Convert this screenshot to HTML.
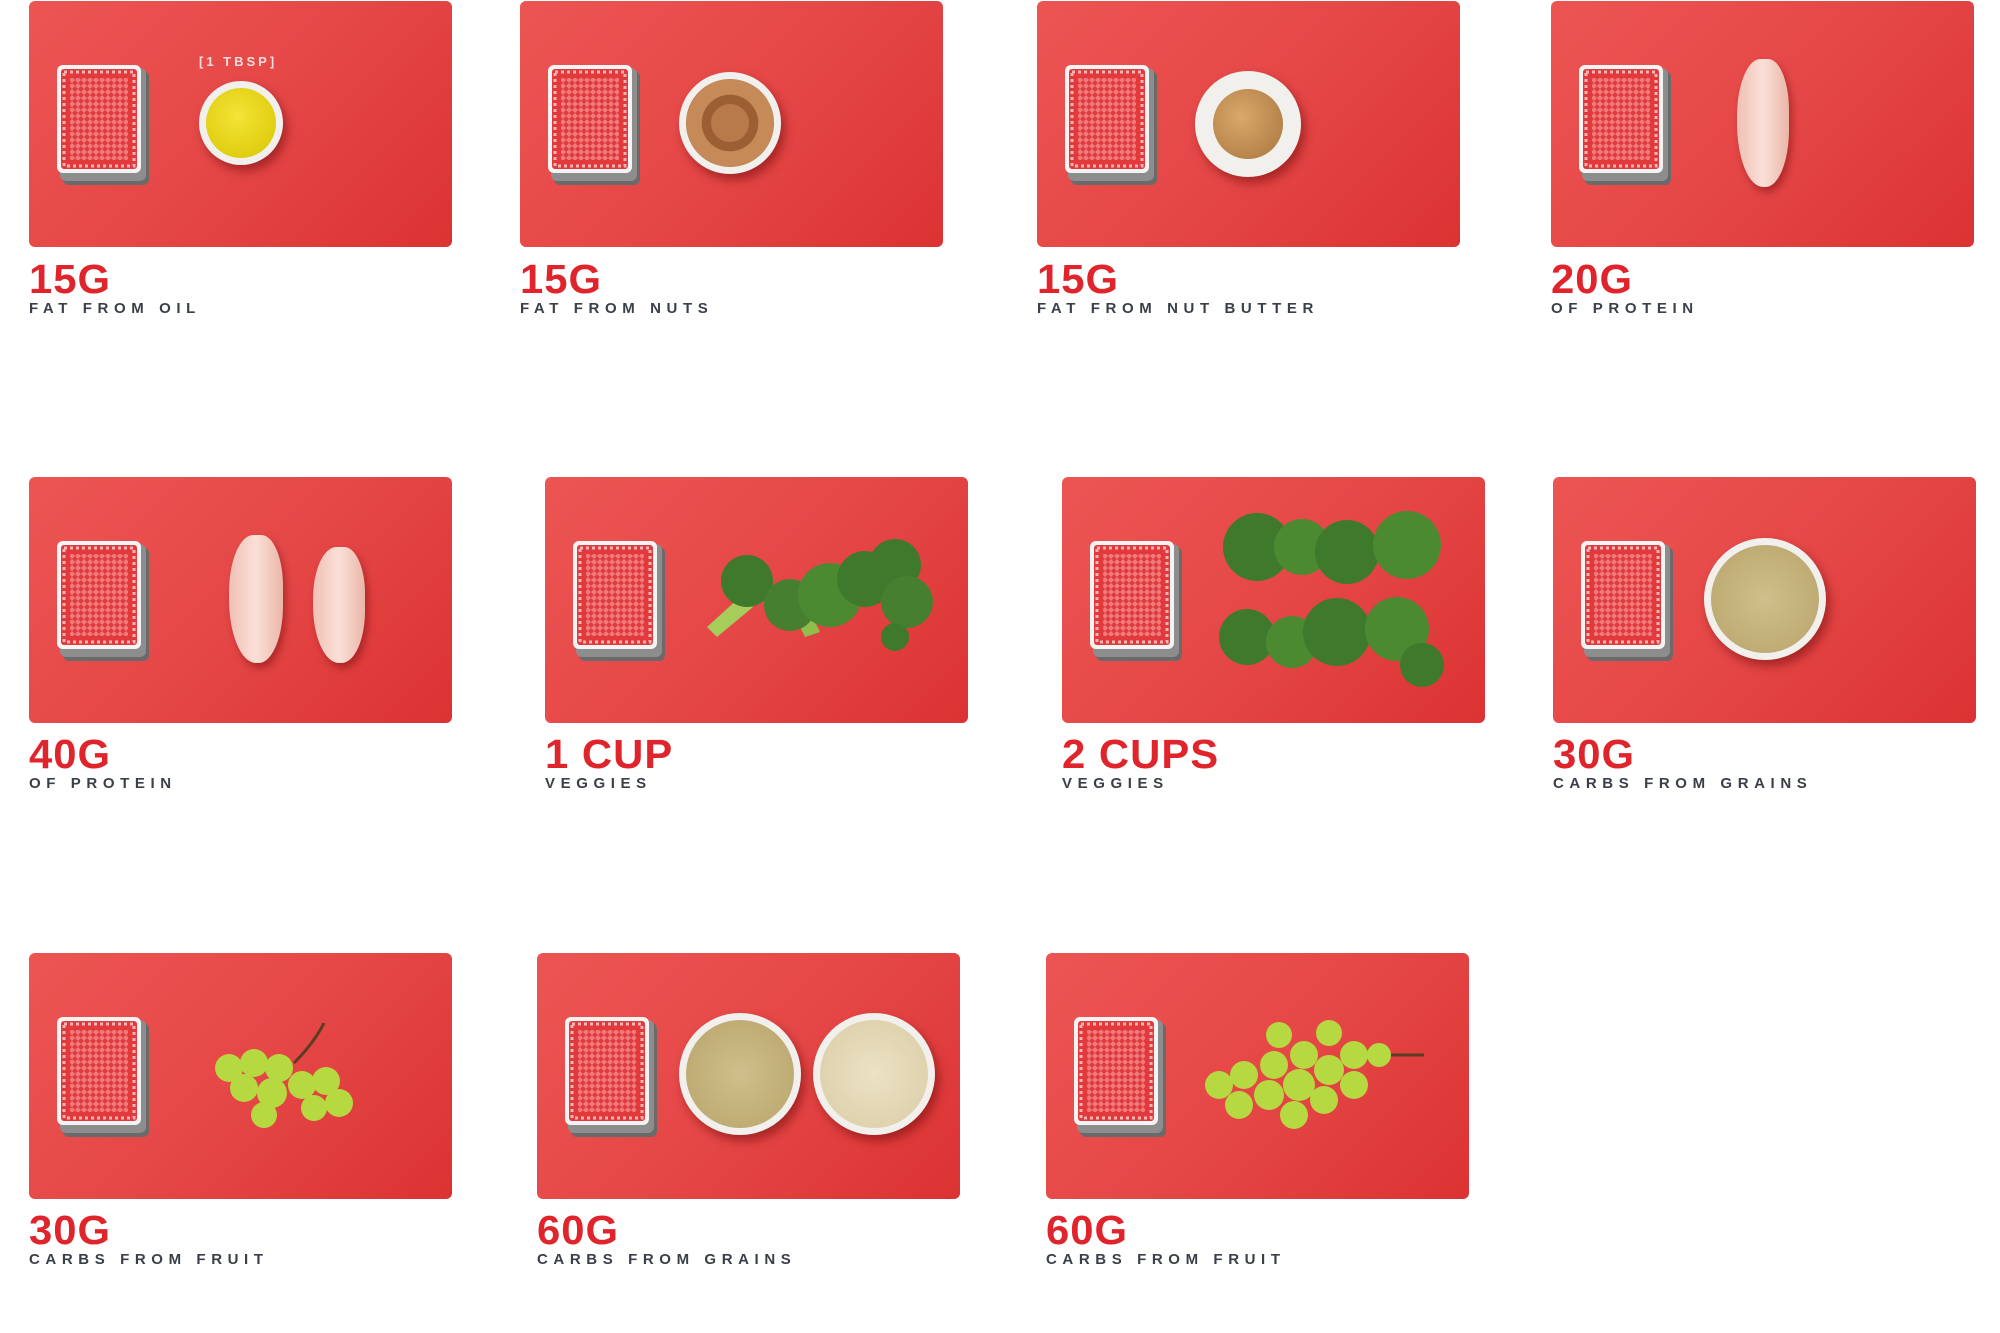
<!DOCTYPE html>
<html><head><meta charset="utf-8"><style>
*{margin:0;padding:0;box-sizing:border-box}
body{width:2000px;height:1333px;background:#fff;position:relative;overflow:hidden;font-family:"Liberation Sans",sans-serif}
.c{position:absolute;width:423px;height:246px;border-radius:6px;background:linear-gradient(135deg,#ec5553 0%,#e44645 55%,#dc3233 100%);overflow:hidden}
.d{position:absolute;left:28px;top:64px;width:92px;height:120px}
.h{position:absolute;font-weight:bold;font-size:41px;color:#e0242c;letter-spacing:1px;transform:scaleX(1.02);transform-origin:left;line-height:1}
.s{position:absolute;font-weight:bold;font-size:15px;color:#3a3f48;letter-spacing:5.6px;line-height:1}
.bowl{position:absolute;border-radius:50%;background:#f2f0ec;box-shadow:4px 6px 10px rgba(90,0,0,.45)}
.bowl i{position:absolute;inset:7px;border-radius:50%}
.o{position:absolute}
</style></head><body>
<svg width="0" height="0" style="position:absolute"><defs>
<pattern id="p" width="6" height="6" patternUnits="userSpaceOnUse"><rect width="6" height="6" fill="#e03b3e"/><path d="M3 0L6 3L3 6L0 3Z" fill="#f07a7c"/></pattern>
<symbol id="deck" viewBox="0 0 92 120"><rect x="6" y="6" width="86" height="114" rx="6" fill="#6a6a6a"/><rect x="3" y="3" width="86" height="113" rx="6" fill="#8d8d8d"/><rect x="0" y="0" width="84" height="108" rx="6" fill="#f4f4f4"/><rect x="4" y="4" width="76" height="100" rx="3" fill="#e2393c"/><rect x="7" y="7" width="70" height="94" fill="none" stroke="#f6b5b5" stroke-width="3" stroke-dasharray="3 3"/><rect x="13" y="13" width="58" height="82" fill="url(#p)"/></symbol>
</defs></svg>

<!-- Row 1 -->
<div class="c" style="left:29px;top:1px"><svg class="d"><use href="#deck"/></svg>
<div style="position:absolute;left:170px;top:53px;color:#f6dede;font-size:13px;font-weight:bold;letter-spacing:3px">[1 TBSP]</div>
<div class="bowl" style="left:170px;top:80px;width:84px;height:84px"><i style="background:radial-gradient(circle at 45% 40%,#f3e437,#d8c500)"></i></div></div>
<div class="h" style="left:29px;top:259px">15G</div><div class="s" style="left:29px;top:301px">FAT FROM OIL</div>

<div class="c" style="left:520px;top:1px"><svg class="d"><use href="#deck"/></svg>
<div class="bowl" style="left:159px;top:71px;width:102px;height:102px"><i style="background:radial-gradient(circle,#b87a4a 0 30%,#9c5f33 31% 45%,#c58a57 46% 70%,#8d5127 71%)"></i></div></div>
<div class="h" style="left:520px;top:259px">15G</div><div class="s" style="left:520px;top:301px">FAT FROM NUTS</div>

<div class="c" style="left:1037px;top:1px"><svg class="d"><use href="#deck"/></svg>
<div class="bowl" style="left:158px;top:70px;width:106px;height:106px"><i style="inset:18px;background:radial-gradient(circle at 40% 40%,#d9a86a,#a8753d)"></i></div></div>
<div class="h" style="left:1037px;top:259px">15G</div><div class="s" style="left:1037px;top:301px">FAT FROM NUT BUTTER</div>

<div class="c" style="left:1551px;top:1px"><svg class="d"><use href="#deck"/></svg>
<div class="o" style="left:186px;top:58px;width:52px;height:128px;border-radius:45% 40% 45% 50%;background:linear-gradient(90deg,#f0c0b4,#fbe0d8,#eab6a8);box-shadow:3px 5px 8px rgba(90,0,0,.4)"></div></div>
<div class="h" style="left:1551px;top:259px">20G</div><div class="s" style="left:1551px;top:301px">OF PROTEIN</div>

<!-- Row 2 -->
<div class="c" style="left:29px;top:477px"><svg class="d"><use href="#deck"/></svg>
<div class="o" style="left:200px;top:58px;width:54px;height:128px;border-radius:45% 40% 45% 50%;background:linear-gradient(90deg,#f0c0b4,#fbe0d8,#eab6a8);box-shadow:3px 5px 8px rgba(90,0,0,.4)"></div>
<div class="o" style="left:284px;top:70px;width:52px;height:116px;border-radius:45% 40% 45% 50%;background:linear-gradient(90deg,#f0c0b4,#fbe0d8,#eab6a8);box-shadow:3px 5px 8px rgba(90,0,0,.4)"></div></div>
<div class="h" style="left:29px;top:734px">40G</div><div class="s" style="left:29px;top:776px">OF PROTEIN</div>

<div class="c" style="left:545px;top:477px"><svg class="d"><use href="#deck"/></svg>
<svg class="o" style="left:150px;top:60px" width="245" height="125"><g fill="#3f7a2c">
<path d="M12 90L45 60L58 70L22 100Z" fill="#a6cd5a"/><path d="M100 80L110 100L125 95L115 75Z" fill="#8fbf4a"/>
<circle cx="52" cy="44" r="26"/><circle cx="95" cy="68" r="26" fill="#477f30"/><circle cx="135" cy="58" r="32" fill="#4c8a32"/><circle cx="170" cy="42" r="28"/><circle cx="200" cy="28" r="26"/><circle cx="212" cy="65" r="26" fill="#477f30"/><circle cx="200" cy="100" r="14"/></g></svg></div>
<div class="h" style="left:545px;top:734px">1 CUP</div><div class="s" style="left:545px;top:776px">VEGGIES</div>

<div class="c" style="left:1062px;top:477px"><svg class="d"><use href="#deck"/></svg>
<svg class="o" style="left:150px;top:30px" width="245" height="190"><g fill="#3f7a2c">
<circle cx="45" cy="40" r="34"/><circle cx="90" cy="40" r="28" fill="#4c8a32"/><circle cx="135" cy="45" r="32"/><circle cx="195" cy="38" r="34" fill="#4c8a32"/>
<circle cx="35" cy="130" r="28"/><circle cx="80" cy="135" r="26" fill="#4c8a32"/><circle cx="125" cy="125" r="34"/><circle cx="185" cy="122" r="32" fill="#4c8a32"/><circle cx="210" cy="158" r="22"/>
</g></svg></div>
<div class="h" style="left:1062px;top:734px">2 CUPS</div><div class="s" style="left:1062px;top:776px">VEGGIES</div>

<div class="c" style="left:1553px;top:477px"><svg class="d"><use href="#deck"/></svg>
<div class="bowl" style="left:151px;top:61px;width:122px;height:122px"><i style="background:radial-gradient(circle,#cfbf8a,#b8a46c)"></i></div></div>
<div class="h" style="left:1553px;top:734px">30G</div><div class="s" style="left:1553px;top:776px">CARBS FROM GRAINS</div>

<!-- Row 3 -->
<div class="c" style="left:29px;top:953px"><svg class="d"><use href="#deck"/></svg>
<svg class="o" style="left:185px;top:70px" width="160" height="105"><path d="M80 40Q100 20 110 0" stroke="#5a3d22" stroke-width="3" fill="none"/><g fill="#b6d840">
<circle cx="15" cy="45" r="14"/><circle cx="40" cy="40" r="14"/><circle cx="65" cy="45" r="14"/><circle cx="30" cy="65" r="14"/><circle cx="58" cy="70" r="15"/><circle cx="88" cy="62" r="14"/><circle cx="112" cy="58" r="14"/><circle cx="125" cy="80" r="14"/><circle cx="100" cy="85" r="13"/><circle cx="50" cy="92" r="13"/></g></svg></div>
<div class="h" style="left:29px;top:1210px">30G</div><div class="s" style="left:29px;top:1252px">CARBS FROM FRUIT</div>

<div class="c" style="left:537px;top:953px"><svg class="d"><use href="#deck"/></svg>
<div class="bowl" style="left:142px;top:60px;width:122px;height:122px"><i style="background:radial-gradient(circle,#cfbf8a,#b8a46c)"></i></div>
<div class="bowl" style="left:276px;top:60px;width:122px;height:122px"><i style="background:radial-gradient(circle,#ece2c4,#d9cca6)"></i></div></div>
<div class="h" style="left:537px;top:1210px">60G</div><div class="s" style="left:537px;top:1252px">CARBS FROM GRAINS</div>

<div class="c" style="left:1046px;top:953px"><svg class="d"><use href="#deck"/></svg>
<svg class="o" style="left:158px;top:62px" width="225" height="120"><path d="M150 40L220 40" stroke="#5a3d22" stroke-width="3"/><g fill="#b6d840">
<circle cx="15" cy="70" r="14"/><circle cx="40" cy="60" r="14"/><circle cx="35" cy="90" r="14"/><circle cx="65" cy="80" r="15"/><circle cx="70" cy="50" r="14"/><circle cx="95" cy="70" r="16"/><circle cx="90" cy="100" r="14"/><circle cx="100" cy="40" r="14"/><circle cx="125" cy="55" r="15"/><circle cx="120" cy="85" r="14"/><circle cx="150" cy="40" r="14"/><circle cx="150" cy="70" r="14"/><circle cx="75" cy="20" r="13"/><circle cx="125" cy="18" r="13"/><circle cx="175" cy="40" r="12"/></g></svg></div>
<div class="h" style="left:1046px;top:1210px">60G</div><div class="s" style="left:1046px;top:1252px">CARBS FROM FRUIT</div>
</body></html>
